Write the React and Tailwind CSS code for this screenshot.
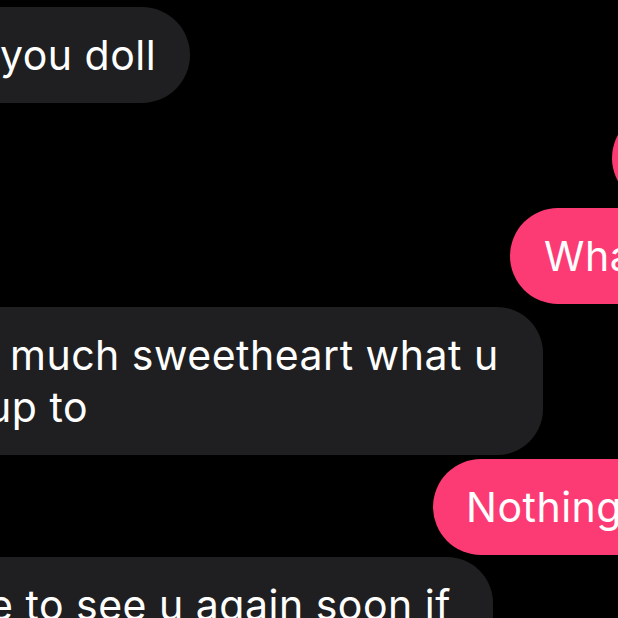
export default function App() {
  return (
    <div className="w-[618px] h-[618px] overflow-hidden bg-black text-white font-['Inter','Liberation_Sans',sans-serif] text-[41px] leading-[52px] tracking-[0.5px]">
      <div className="flex flex-col items-start">
        {/* incoming */}
        <div className="mt-[7px] -ml-[60px] pl-[60px] pr-[34px] py-[22px] rounded-full bg-[#1f1f21] whitespace-nowrap">
          you doll
        </div>

        {/* outgoing, mostly off screen */}
        <div className="mt-[7px] ml-[612px] w-max px-[34px] py-[22px] rounded-full bg-[#fc3b74] whitespace-nowrap">
          Hey
        </div>

        <div className="mt-[2px] ml-[510px] w-max pl-[34px] pr-[60px] py-[22px] rounded-full bg-[#fc3b74] whitespace-nowrap">
          What are you doing
        </div>

        {/* incoming, two lines */}
        <div className="mt-[3px] -ml-[60px] w-[603px] pl-[60px] py-[22px] rounded-[46px] bg-[#1f1f21] whitespace-nowrap">
          <div className="pl-[10px]">much sweetheart what u</div>
          <div className="-ml-[13px]">up to</div>
        </div>

        <div className="mt-[4px] ml-[433px] w-max pl-[33px] pr-[60px] py-[22px] rounded-full bg-[#fc3b74] whitespace-nowrap">
          Nothing much
        </div>

        <div className="mt-[2px] -ml-[60px] w-[553px] pl-[60px] py-[22px] rounded-[46px] bg-[#1f1f21] whitespace-nowrap">
          <div className="-ml-[11px]">e to see u again soon if</div>
          <div className="-ml-[11px]">you want</div>
        </div>
      </div>
    </div>
  );
}
